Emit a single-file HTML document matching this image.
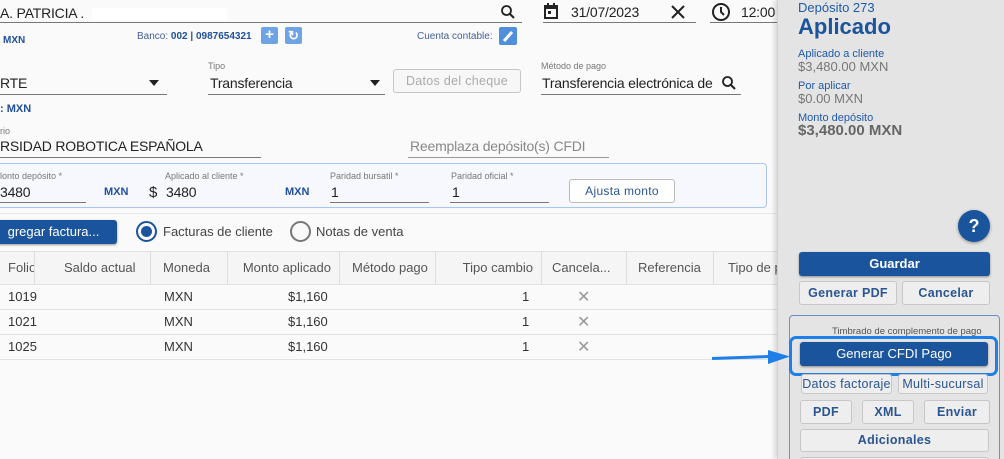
<!DOCTYPE html>
<html><head><meta charset="utf-8"><style>
*{box-sizing:border-box;margin:0;padding:0}
html,body{width:1004px;height:459px;overflow:hidden}
body{background:#fafafa;font-family:"Liberation Sans",sans-serif;position:relative;color:#222}
.a{position:absolute;white-space:nowrap}
.ul{position:absolute;border-bottom:1px solid #777}
.lbl{position:absolute;font-size:9px;color:#777;white-space:nowrap}
.v{position:absolute;font-size:14px;color:#222;white-space:nowrap;letter-spacing:-0.2px}
.blue{color:#1f4f9a}
.th{position:absolute;top:251px;height:33px;line-height:33px;font-size:13px;color:#555;border-right:1px solid #ddd;padding:0 8px;white-space:nowrap;overflow:hidden}
.td{position:absolute;font-size:13px;color:#333}
.rl{position:absolute;left:0;width:777px;height:1px;background:#e2e2e2}
.btn{position:absolute;border:1px solid #c7c7c7;border-radius:3px;background:#eee;color:#2a5592;font-size:12.5px;font-weight:bold;text-align:center;letter-spacing:0.3px;white-space:nowrap;overflow:hidden}
.pb{position:absolute;background:#1a549c;color:#fff;font-weight:bold;text-align:center;border-radius:3px;box-shadow:0 1px 2px rgba(0,0,0,.4);white-space:nowrap;overflow:hidden}
</style></head><body>
<div class="v" style="left:0;top:5px;font-size:14px">A. PATRICIA .</div>
<div class="a" style="left:92px;top:8px;width:135px;height:12px;background:#fff"></div>
<div class="ul" style="left:0;top:22px;width:522px"></div>
<svg class="a" style="left:500px;top:4px" width="16" height="16"><circle cx="6.5" cy="6.5" r="4.5" fill="none" stroke="#222" stroke-width="1.8"/><line x1="10" y1="10" x2="14" y2="14" stroke="#222" stroke-width="2"/></svg>
<svg class="a" style="left:542px;top:2px" width="18" height="18"><rect x="2" y="3" width="14" height="14" fill="#222"/><rect x="4" y="7" width="10" height="8" fill="#fafafa"/><rect x="5" y="1" width="2" height="4" fill="#222"/><rect x="11" y="1" width="2" height="4" fill="#222"/><rect x="6" y="9" width="3" height="3" fill="#222"/></svg>
<div class="v" style="left:571px;top:4px;font-size:14px">31/07/2023</div>
<svg class="a" style="left:670px;top:4px" width="16" height="16"><path d="M2 2L14 14M14 2L2 14" stroke="#222" stroke-width="2"/></svg>
<div class="ul" style="left:543px;top:22px;width:153px"></div>
<svg class="a" style="left:711px;top:2px" width="20" height="20"><circle cx="10" cy="10" r="8" fill="none" stroke="#222" stroke-width="2"/><path d="M10 5V10L13 13" stroke="#222" stroke-width="2" fill="none"/></svg>
<div class="v" style="left:741px;top:4px;font-size:14px">12:00</div>
<div class="ul" style="left:710px;top:22px;width:67px"></div>

<div class="a blue" style="left:3px;top:35px;font-size:10px;font-weight:bold">MXN</div>
<div class="a" style="left:137px;top:31px;font-size:10px;color:#45609a">Banco: <b style="color:#1f4f9a">002 | 0987654321</b></div>
<div class="a" style="left:261px;top:27px;width:17px;height:17px;background:#6ea4e6;border-radius:2px;color:#fff;font-weight:bold;text-align:center;line-height:16px;font-size:15px">+</div>
<div class="a" style="left:285px;top:27px;width:17px;height:17px;background:#6ea4e6;border-radius:2px;color:#fff;font-weight:bold;text-align:center;line-height:17px;font-size:13px">↻</div>
<div class="a" style="left:417px;top:31px;font-size:10px;color:#45609a">Cuenta contable:</div>
<div class="a" style="left:499px;top:27px;width:18px;height:18px;background:#4f8fdc;border-radius:2px"><svg width="18" height="18"><path d="M5 14L13 5" stroke="#fff" stroke-width="3"/></svg></div>

<div class="v" style="left:0;top:75px">RTE</div>
<div class="a" style="left:149px;top:80px;border-left:5px solid transparent;border-right:5px solid transparent;border-top:6px solid #222"></div>
<div class="ul" style="left:0;top:94px;width:167px"></div>
<div class="lbl" style="left:208px;top:61px">Tipo</div>
<div class="v" style="left:210px;top:75px">Transferencia</div>
<div class="a" style="left:370px;top:80px;border-left:5px solid transparent;border-right:5px solid transparent;border-top:6px solid #222"></div>
<div class="ul" style="left:208px;top:94px;width:177px"></div>
<div class="btn" style="left:393px;top:69px;width:128px;height:24px;line-height:22px;color:#aaa;background:#f7f7f7;font-weight:normal">Datos del cheque</div>
<div class="lbl" style="left:541px;top:61px">Método de pago</div>
<div class="v" style="left:542px;top:75px;width:172px;overflow:hidden">Transferencia electrónica de</div>
<svg class="a" style="left:721px;top:75px" width="16" height="16"><circle cx="6.5" cy="6.5" r="4.5" fill="none" stroke="#222" stroke-width="1.8"/><line x1="10" y1="10" x2="14" y2="14" stroke="#222" stroke-width="2"/></svg>
<div class="ul" style="left:541px;top:94px;width:200px"></div>
<div class="a blue" style="left:0;top:103px;font-size:11px;font-weight:bold">: MXN</div>

<div class="lbl" style="left:0;top:126px">rio</div>
<div class="v" style="left:0;top:138px">RSIDAD ROBOTICA ESPAÑOLA</div>
<div class="ul" style="left:0;top:157px;width:261px"></div>
<div class="v" style="left:410px;top:138px;color:#888">Reemplaza depósito(s) CFDI</div>
<div class="ul" style="left:408px;top:157px;width:201px;border-color:#999"></div>

<div class="a" style="left:-5px;top:163px;width:772px;height:45px;border:1px solid #a9c4ee;border-radius:4px;background:#f6f8fd"></div>
<div class="lbl" style="left:0;top:171px">lonto depósito *</div>
<div class="v" style="left:0;top:184px">3480</div>
<div class="a blue" style="left:104px;top:186px;font-size:11px;font-weight:bold">MXN</div>
<div class="ul" style="left:0;top:202px;width:86px"></div>
<div class="lbl" style="left:165px;top:171px">Aplicado al cliente *</div>
<div class="v" style="left:149px;top:184px;font-size:15px">$</div>
<div class="v" style="left:166px;top:184px">3480</div>
<div class="a blue" style="left:285px;top:186px;font-size:11px;font-weight:bold">MXN</div>
<div class="lbl" style="left:330px;top:171px">Paridad bursatil *</div>
<div class="v" style="left:331px;top:184px">1</div>
<div class="ul" style="left:330px;top:202px;width:99px"></div>
<div class="lbl" style="left:451px;top:171px">Paridad oficial *</div>
<div class="v" style="left:452px;top:184px">1</div>
<div class="ul" style="left:450px;top:202px;width:99px"></div>
<div class="btn" style="left:569px;top:179px;width:106px;height:24px;line-height:22px;background:#fff;font-weight:normal;font-size:12px;color:#2a5592;border-color:#bbb">Ajusta monto</div>

<div class="rl" style="top:213px;background:#e8e8e8"></div>
<div class="pb" style="left:-10px;top:220px;width:127px;height:24px;line-height:24px;font-size:13px;font-weight:normal">gregar factura...</div>
<div class="a" style="left:136px;top:221px;width:21px;height:21px;border:2px solid #1a549c;border-radius:50%"><div style="margin:3px;width:11px;height:11px;border-radius:50%;background:#1a549c"></div></div>
<div class="a" style="left:163px;top:224px;font-size:13px;color:#444">Facturas de cliente</div>
<div class="a" style="left:290px;top:221px;width:21px;height:21px;border:2px solid #777;border-radius:50%"></div>
<div class="a" style="left:316px;top:224px;font-size:13px;color:#444">Notas de venta</div>

<div class="a" style="left:0;top:251px;width:777px;height:34px;background:#f5f5f5"></div>
<div class="rl" style="top:251px"></div><div class="rl" style="top:284px"></div>
<div class="th" style="left:0;width:35px;padding-left:8px">Folio</div>
<div class="th" style="left:35px;width:116px;padding-left:29px">Saldo actual</div>
<div class="th" style="left:151px;width:77px;padding-left:12px">Moneda</div>
<div class="th" style="left:228px;width:112px;text-align:right">Monto aplicado</div>
<div class="th" style="left:340px;width:96px;padding-left:12px">Método pago</div>
<div class="th" style="left:436px;width:106px;text-align:right">Tipo cambio</div>
<div class="th" style="left:542px;width:85px;padding-left:10px">Cancela...</div>
<div class="th" style="left:627px;width:87px;padding-left:11px">Referencia</div>
<div class="th" style="left:714px;width:63px;border:none;padding-left:14px">Tipo de p</div>
<div class="td" style="left:8px;top:289px">1019</div><div class="td" style="left:164px;top:289px">MXN</div><div class="td" style="left:288px;top:289px">$1,160</div><div class="td" style="left:522px;top:289px">1</div><div class="td" style="left:577px;top:287px;font-size:16px;color:#999">✕</div>
<div class="rl" style="top:309px"></div>
<div class="td" style="left:8px;top:314px">1021</div><div class="td" style="left:164px;top:314px">MXN</div><div class="td" style="left:288px;top:314px">$1,160</div><div class="td" style="left:522px;top:314px">1</div><div class="td" style="left:577px;top:312px;font-size:16px;color:#999">✕</div>
<div class="rl" style="top:334px"></div>
<div class="td" style="left:8px;top:339px">1025</div><div class="td" style="left:164px;top:339px">MXN</div><div class="td" style="left:288px;top:339px">$1,160</div><div class="td" style="left:522px;top:339px">1</div><div class="td" style="left:577px;top:337px;font-size:16px;color:#999">✕</div>
<div class="rl" style="top:359px"></div>

<div class="a" style="left:777px;top:0;width:227px;height:459px;background:#e4e4e4;box-shadow:-3px 0 4px rgba(0,0,0,.12);border-left:1px solid #d0d0d0;overflow:hidden">
<div class="a" style="left:20px;top:0;font-size:13px;color:#1f5aa8">Depósito 273</div>
<div class="a" style="left:20px;top:14px;font-size:22px;font-weight:bold;color:#1a549c">Aplicado</div>
<div class="a" style="left:20px;top:48px;font-size:11px;color:#1f5aa8">Aplicado a cliente</div>
<div class="a" style="left:20px;top:59px;font-size:13px;color:#777">$3,480.00 MXN</div>
<div class="a" style="left:20px;top:80px;font-size:11px;color:#1f5aa8">Por aplicar</div>
<div class="a" style="left:20px;top:91px;font-size:13px;color:#777">$0.00 MXN</div>
<div class="a" style="left:20px;top:112px;font-size:11px;color:#1f5aa8">Monto depósito</div>
<div class="a" style="left:20px;top:122px;font-size:15px;font-weight:bold;color:#666">$3,480.00 MXN</div>
<div class="a" style="left:180px;top:210px;width:32px;height:32px;border-radius:50%;background:#1a549c;color:#fff;font-weight:bold;font-size:18px;text-align:center;line-height:32px;box-shadow:0 1px 3px rgba(0,0,0,.4)">?</div>
<div class="pb" style="left:21px;top:252px;width:191px;height:24px;line-height:24px;font-size:13px">Guardar</div>
<div class="btn" style="left:21px;top:281px;width:98px;height:24px;line-height:22px">Generar PDF</div>
<div class="btn" style="left:124px;top:281px;width:88px;height:24px;line-height:22px">Cancelar</div>
<div class="a" style="left:11px;top:315px;width:211px;height:160px;border:1px solid #6d8fc8;border-radius:4px"></div>
<div class="a" style="left:54px;top:326px;font-size:9.5px;color:#555">Timbrado de complemento de pago</div>
<div class="a" style="left:11px;top:336px;width:209px;height:40px;border:3px solid #1e7fe8;border-radius:7px"></div>
<div class="pb" style="left:22px;top:342px;width:188px;height:24px;line-height:24px;font-size:13px;font-weight:normal">Generar CFDI Pago</div>
<div class="btn" style="left:23px;top:374px;width:91px;height:20px;line-height:18px;font-weight:normal">Datos factoraje</div>
<div class="btn" style="left:120px;top:374px;width:90px;height:20px;line-height:18px;font-weight:normal">Multi-sucursal</div>
<div class="btn" style="left:22px;top:400px;width:52px;height:24px;line-height:22px">PDF</div>
<div class="btn" style="left:84px;top:400px;width:52px;height:24px;line-height:22px">XML</div>
<div class="btn" style="left:146px;top:400px;width:66px;height:24px;line-height:22px">Enviar</div>
<div class="btn" style="left:22px;top:429px;width:189px;height:23px;line-height:21px">Adicionales</div>
<div class="btn" style="left:22px;top:457px;width:189px;height:10px"></div>
</div>
<svg class="a" style="left:710px;top:348px" width="80" height="20"><path d="M2 10.5L60 8.5" stroke="#1e7fe8" stroke-width="3"/><path d="M58 2L80 8.5L58 16Z" fill="#1e7fe8"/></svg>
</body></html>
